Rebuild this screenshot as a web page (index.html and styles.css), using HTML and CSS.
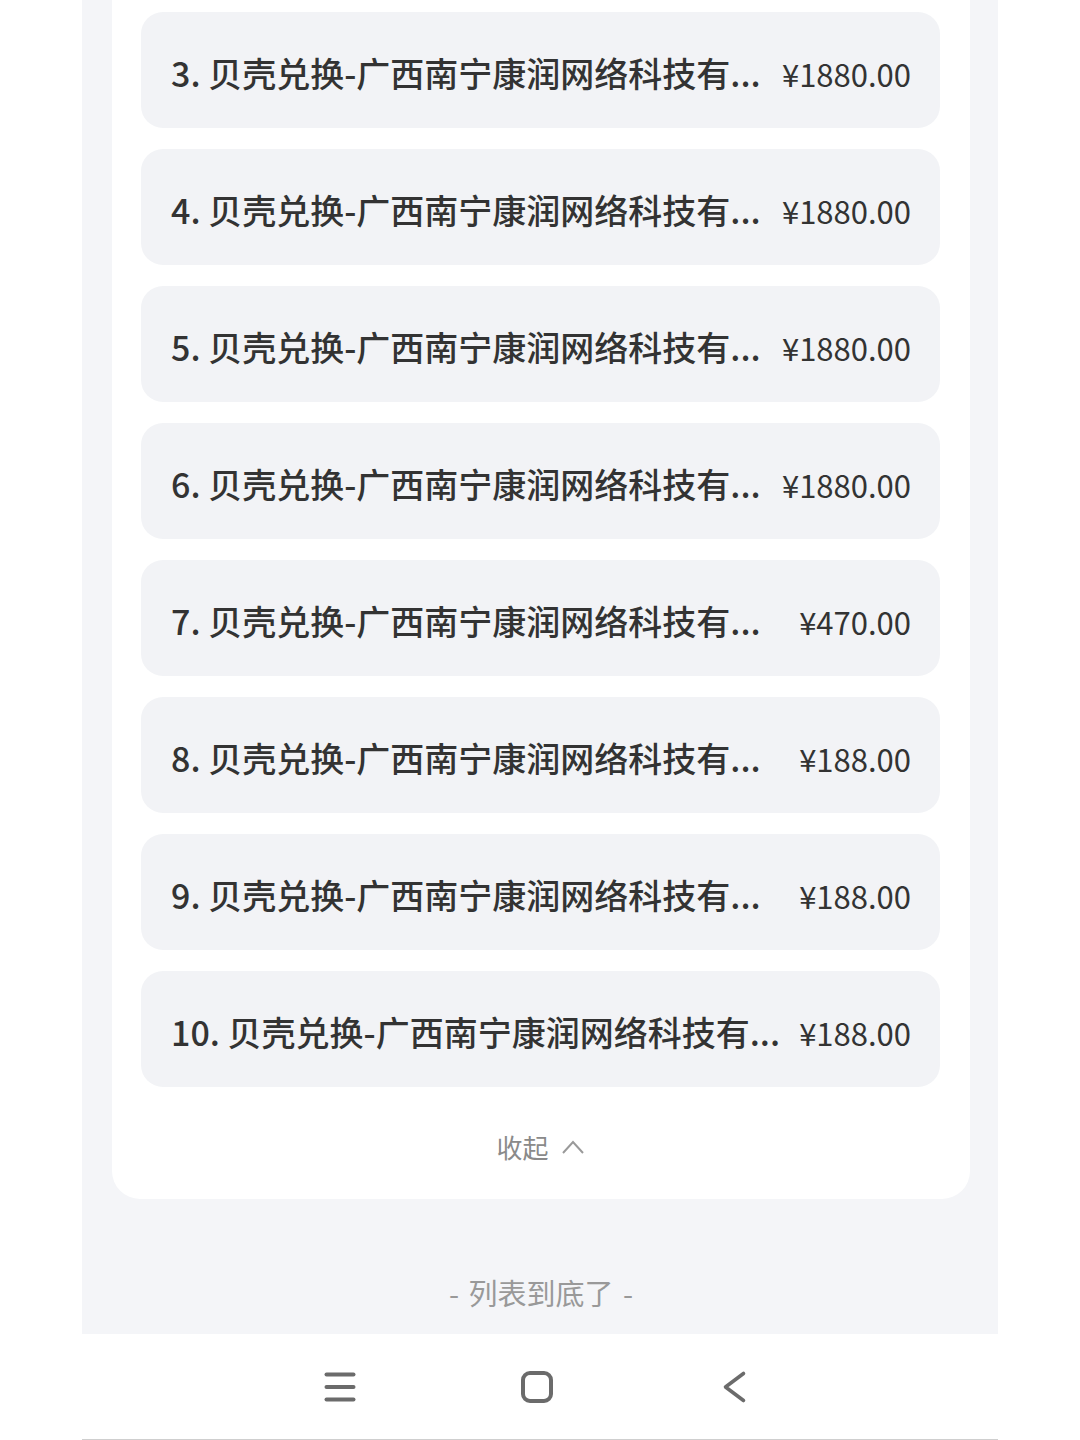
FILE: index.html
```html
<!DOCTYPE html>
<html lang="zh-CN">
<head>
    <meta charset="UTF-8">
    <meta name="viewport" content="width=device-width, initial-scale=1.0">
    <title>兑换记录</title>
    <link rel="stylesheet" href="styles.css">
</head>
<body>

    <div class="phone">
        <div class="screen">
            <div class="record-card">
                <div class="record-list">
                    <div class="record-row">
                        <span class="record-name">3. 贝壳兑换-广西南宁康润网络科技有...</span>
                        <span class="record-price">¥1880.00</span>
                    </div>
                    <div class="record-row">
                        <span class="record-name">4. 贝壳兑换-广西南宁康润网络科技有...</span>
                        <span class="record-price">¥1880.00</span>
                    </div>
                    <div class="record-row">
                        <span class="record-name">5. 贝壳兑换-广西南宁康润网络科技有...</span>
                        <span class="record-price">¥1880.00</span>
                    </div>
                    <div class="record-row">
                        <span class="record-name">6. 贝壳兑换-广西南宁康润网络科技有...</span>
                        <span class="record-price">¥1880.00</span>
                    </div>
                    <div class="record-row">
                        <span class="record-name">7. 贝壳兑换-广西南宁康润网络科技有...</span>
                        <span class="record-price">¥470.00</span>
                    </div>
                    <div class="record-row">
                        <span class="record-name">8. 贝壳兑换-广西南宁康润网络科技有...</span>
                        <span class="record-price">¥188.00</span>
                    </div>
                    <div class="record-row">
                        <span class="record-name">9. 贝壳兑换-广西南宁康润网络科技有...</span>
                        <span class="record-price">¥188.00</span>
                    </div>
                    <div class="record-row">
                        <span class="record-name">10. 贝壳兑换-广西南宁康润网络科技有...</span>
                        <span class="record-price">¥188.00</span>
                    </div>
                </div>

                <div class="collapse-btn">
                    收起
                    <svg class="collapse-icon" viewBox="0 0 24 16" width="24" height="16">
                        <polyline points="2,14 12,3 22,14" fill="none" stroke="#9a9a9a" stroke-width="2"/>
                    </svg>
                </div>
            </div>

            <div class="list-end">- 列表到底了 -</div>
        </div>

        <!-- barra de navegación del sistema -->
        <div class="nav-bar">
            <svg class="nav-icon" viewBox="0 0 36 36" width="36" height="36">
                <g stroke="#6b6b6b" stroke-width="4" stroke-linecap="round">
                    <line x1="4.5" y1="5.5" x2="31.5" y2="5.5"/>
                    <line x1="4.5" y1="18" x2="31.5" y2="18"/>
                    <line x1="4.5" y1="30.5" x2="31.5" y2="30.5"/>
                </g>
            </svg>
            <svg class="nav-icon" viewBox="0 0 36 36" width="36" height="36">
                <rect x="4" y="4" width="28" height="28" rx="7" fill="none" stroke="#6b6b6b" stroke-width="4"/>
            </svg>
            <svg class="nav-icon" viewBox="0 0 36 36" width="36" height="36">
                <polyline points="27.5,4.5 9.5,18 27.5,31.5" fill="none" stroke="#6b6b6b" stroke-width="3.6" stroke-linecap="round" stroke-linejoin="round"/>
            </svg>
        </div>
    </div>

</body>
</html>
```

FILE: styles.css
```css
body {
    margin: 0;
    background-color: #fff;
    font-family: "Noto Sans CJK SC", "Noto Sans", sans-serif;
    color: #333;
}

.phone {
    width: 916px;
    margin-left: 82px;
}

.screen {
    background-color: #f4f5f8;
    padding: 0 28px 0 30px;
}

.record-card {
    background-color: #fff;
    border-radius: 0 0 28px 28px;
    padding: 12px 30px 0 29px;
}

.record-list {
    display: flex;
    flex-direction: column;
    gap: 21px;
}

.record-row {
    display: flex;
    align-items: center;
    justify-content: space-between;
    gap: 14px;
    height: 116px;
    padding: 0 29px 0 30px;
    background-color: #f2f3f6;
    border-radius: 22px;
}

.record-name {
    min-width: 0;
    white-space: nowrap;
    overflow: hidden;
    text-overflow: ellipsis;
    font-size: 34px;
    font-weight: 500;
    color: #333;
    padding-top: 4px;
}

.record-price {
    flex-shrink: 0;
    font-size: 31px;
    color: #333;
    padding-top: 6px;
}

.collapse-btn {
    display: flex;
    justify-content: center;
    align-items: center;
    gap: 12px;
    padding: 45px 0 37px;
    line-height: 30px;
    font-size: 26px;
    color: #8a8a8a;
}

.collapse-icon {
    display: block;
}

.list-end {
    height: 135px;
    box-sizing: border-box;
    padding-top: 78px;
    line-height: 30px;
    text-align: center;
    font-size: 29px;
    word-spacing: 3px;
    color: #999;
}

.nav-bar {
    display: flex;
    justify-content: center;
    align-items: center;
    gap: 161px;
    height: 105px;
    padding-right: 6px;
    border-bottom: 1px solid #cfcfcf;
}

.nav-icon {
    display: block;
}
```
